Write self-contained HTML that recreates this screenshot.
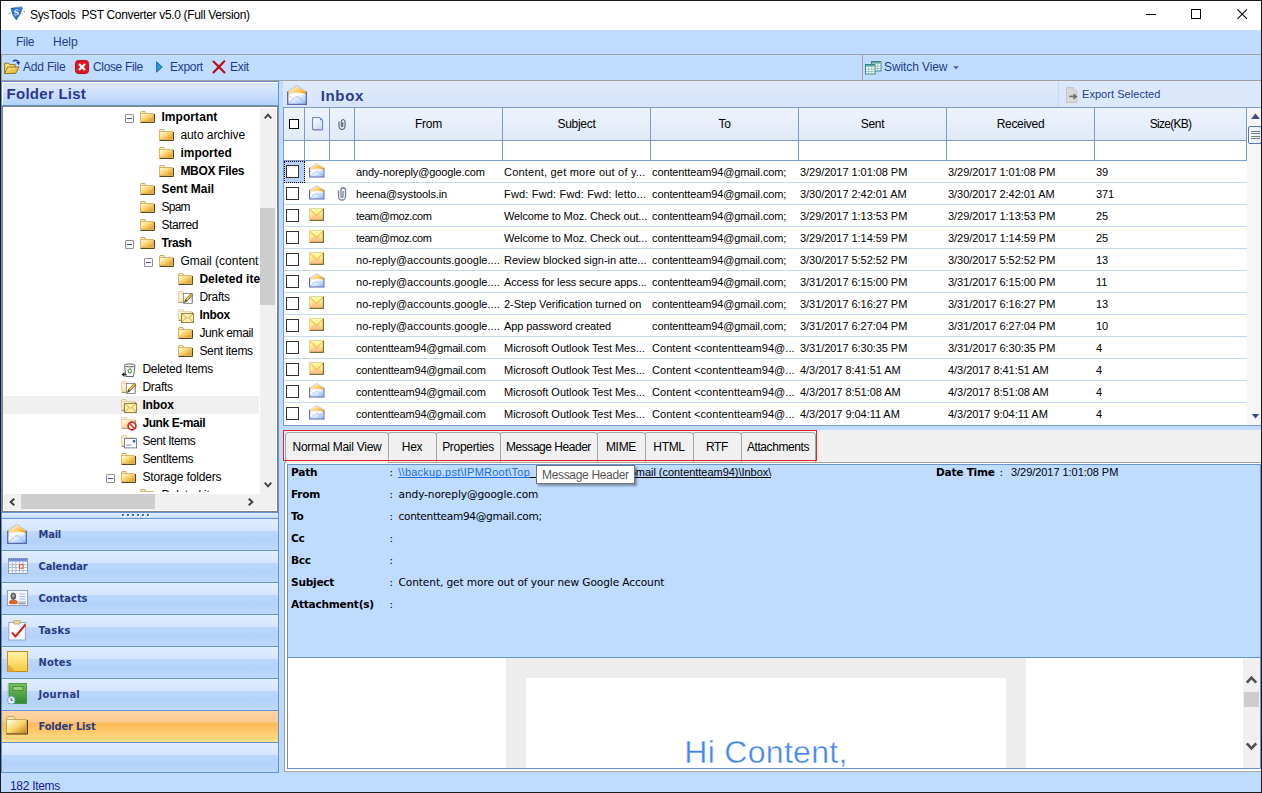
<!DOCTYPE html>
<html>
<head>
<meta charset="utf-8">
<title>SysTools PST Converter v5.0 (Full Version)</title>
<style>
*{box-sizing:border-box;margin:0;padding:0}
html,body{width:1262px;height:793px;overflow:hidden;background:#bfdbff}
body{font-family:"Liberation Sans",sans-serif;font-size:12px;color:#000;position:relative}
.abs{position:absolute}
svg{display:block;overflow:visible}
#win{position:absolute;left:0;top:0;width:1262px;height:793px;background:#bfdbff;overflow:hidden}
.t{position:absolute;white-space:pre;line-height:16px;height:16px}
.seg{font-size:12px}
.navy{color:#1e3c8c}
.tah{font-size:11px;letter-spacing:-0.12px}
.ver{font-family:"DejaVu Sans","Liberation Sans",sans-serif;font-size:10.6px;letter-spacing:-0.1px}
.verb{font-family:"DejaVu Sans","Liberation Sans",sans-serif;font-size:10.6px;font-weight:bold;letter-spacing:-0.25px}
.b{font-weight:bold}
.hl{position:absolute;height:1px}
.vl{position:absolute;width:1px}
.nav{position:absolute;left:2px;width:276px;height:32px;border-top:1px solid #6593cf;background:linear-gradient(#e1edff 0,#d5e5fc 12px,#bdd8fc 12px,#b3d1fa 22px,#bfdafd 31px)}
.nav .t{left:36.5px;top:8px;color:#2b3a85;font-family:"DejaVu Sans Condensed","DejaVu Sans","Liberation Sans",sans-serif;font-weight:bold;font-size:11px;letter-spacing:0.05px}
.nav.sel{background:linear-gradient(#fdd5a8 0,#fbc98e 11px,#fdb959 12px,#fdc86a 20px,#fee08c 31px)}
.cb{position:absolute;width:13px;height:13px;border:1px solid #333;background:#fff}
.row{position:absolute;left:284px;width:962px;height:22px;border-bottom:1px solid #c4d8f2;background:#fff}
.tab{position:absolute;top:432px;height:30px;background:#f0f0f0;border:1px solid #a5a5a5;border-bottom:none;border-radius:4px 4px 0 0}
</style>
</head>
<body>
<div id="win">
<div class="abs" style="left:1px;top:1px;width:1260px;height:29px;background:#fff"></div><svg class="abs" style="left:8px;top:6px" width="18" height="15" viewBox="0 0 18 15"><defs><linearGradient id="sh" x1="0" y1="0" x2="1" y2="1"><stop offset="0" stop-color="#2a63c0"/><stop offset=".5" stop-color="#3f82e0"/><stop offset="1" stop-color="#173c86"/></linearGradient></defs><path d="M2.9 2.3L8.5 1.6L13.8 .9L14.3 2.3L12.6 7.2L8.3 13.9L4.6 8.4Z" fill="url(#sh)" stroke="#1d3f7c" stroke-width=".5"/><path d="M8.5 1.2L13.6 .6" stroke="#c9c9c9" stroke-width=".7"/><path d="M.8 8.4L1.4 7.2M1.6 6.8L2.2 6.2" stroke="#6a6a6a" stroke-width=".8"/><path d="M14.3 7.2L14.9 7.2M16.2 5.2V6.4" stroke="#555" stroke-width=".8"/><text x="8.4" y="9.2" font-family="Liberation Serif, serif" font-weight="bold" font-size="8.6" fill="#fff" text-anchor="middle" transform="rotate(-6 8.4 6)">S</text></svg><span class="t seg" style="left:30px;top:7px;letter-spacing:-0.33px">SysTools  PST Converter v5.0 (Full Version)</span><div class="abs" style="left:1146px;top:14px;width:10px;height:1px;background:#000"></div><div class="abs" style="left:1191px;top:9px;width:10px;height:10px;border:1px solid #000"></div><svg class="abs" style="left:1237px;top:9px" width="10.4" height="10.4" viewBox="0 0 11 11"><path d="M.5 .5L10.5 10.5M10.5 .5L.5 10.5" stroke="#000" stroke-width="1.1"/></svg><span class="t seg navy" style="left:16px;top:34px;letter-spacing:-0.3px">File</span><span class="t seg navy" style="left:53px;top:34px;letter-spacing:0px">Help</span><div class="hl" style="left:1px;top:54px;width:1260px;background:#a0a0a0"></div><div class="hl" style="left:1px;top:80px;width:1260px;background:#a0a0a0"></div><div class="vl" style="left:862px;top:55px;height:25px;background:#a0a0a0"></div><div class="vl" style="left:1px;top:55px;height:25px;background:#a0a0a0"></div><svg class="abs" style="left:4px;top:59px" width="16" height="16" viewBox="0 0 16 16"><defs><linearGradient id="af" x1="0" y1="0" x2="1" y2="1"><stop offset="0" stop-color="#fff19a"/><stop offset="1" stop-color="#d9a21b"/></linearGradient></defs><path d="M.6 14.5V4.2H4.6L5.8 5.6H11.2V8" fill="#f7dc70" stroke="#8a6a14" stroke-width=".9"/><path d="M.6 14.5L3.6 8H15L11.6 14.5Z" fill="url(#af)" stroke="#8a6a14" stroke-width=".9"/><path d="M9 2.6C11.2 .5 14.2 1 14.5 4" fill="none" stroke="#2438a0" stroke-width="1.4"/><path d="M12.1 3.3L14.9 6.3L16 2.5Z" fill="#2438a0"/></svg><span class="t seg navy" style="left:23px;top:59px;letter-spacing:-0.18px">Add File</span><svg class="abs" style="left:75px;top:60px" width="14" height="14" viewBox="0 0 15 15"><rect x=".5" y=".5" width="14" height="14" rx="3.2" fill="#e0141e" stroke="#b30d14"/><path d="M4.3 4.3L10.7 10.7M10.7 4.3L4.3 10.7" stroke="#fff" stroke-width="2.4"/></svg><span class="t seg navy" style="left:93px;top:59px;letter-spacing:-0.35px">Close File</span><svg class="abs" style="left:156px;top:61px" width="7" height="12" viewBox="0 0 7 12"><path d="M.6 .8L6.3 6L.6 11.2Z" fill="#1f9bdc" stroke="#14679a" stroke-width=".9"/></svg><span class="t seg navy" style="left:170px;top:59px;letter-spacing:-0.3px">Export</span><svg class="abs" style="left:212px;top:60px" width="14" height="14" viewBox="0 0 14 14"><path d="M1.5 1.5L12.5 12.5M12.3 1.3L1.5 12.5" stroke="#c0060c" stroke-width="2.1" stroke-linecap="round"/></svg><span class="t seg navy" style="left:230px;top:59px;letter-spacing:-0.3px">Exit</span><svg class="abs" style="left:865px;top:61px" width="17" height="14" viewBox="0 0 17 14"><rect x="6.5" y=".5" width="9.5" height="9.5" fill="#fff" stroke="#3b8588"/><rect x="7" y="1" width="8.5" height="1.7" fill="#62aaa8"/><path d="M9.7 3V9.5M12.8 3V9.5M7 5.2H15.5M7 7.6H15.5" stroke="#7fb5b4" stroke-width=".8"/><rect x=".5" y="3.5" width="9.5" height="9.5" fill="#fff" stroke="#3b8588"/><rect x="1" y="4" width="8.5" height="1.7" fill="#62aaa8"/><path d="M3.7 6V12.5M6.8 6V12.5M1 8.2H9.5M1 10.6H9.5" stroke="#7fb5b4" stroke-width=".8"/></svg><span class="t seg navy" style="left:884px;top:59px;letter-spacing:-0.1px">Switch View</span><svg class="abs" style="left:953px;top:66px" width="6" height="4" viewBox="0 0 6 4"><path d="M.2 .2H5.8L3 3.2Z" fill="#4a5a9a"/></svg><div class="abs" style="left:1px;top:81px;width:278px;height:692px;background:#6593cf"></div><div class="abs" style="left:2px;top:82px;width:276px;height:23px;background:linear-gradient(#dbe9fd 0,#cfe1fd 40%,#b3d1fb 100%);border-top:1px solid #fff;border-left:1px solid #fff"></div><span class="t b" style="left:6.6px;top:83.9px;letter-spacing:0.26px;font-size:15px;color:#2b388f;line-height:20px;height:20px">Folder List</span><div class="abs" style="left:2px;top:106px;width:276px;height:406px;background:#fff;border:1px solid #828282"></div><div class="abs" style="left:3px;top:396px;width:256px;height:18px;background:#f0f0f0"></div><div class="abs" style="left:2px;top:106px;width:258px;height:386px;overflow:hidden"><div class="abs" style="left:123px;top:8px;width:9px;height:9px;border:1px solid #919191;background:#fff;border-radius:1px"><div class="abs" style="left:1px;top:3px;width:5px;height:1px;background:#3b4fa0"></div></div><svg class="abs" style="left:138px;top:5px" width="16" height="13" viewBox="0 0 16 13"><defs><linearGradient id="fgt0" x1="0" y1="0" x2="1" y2="1"><stop offset="0" stop-color="#fffbe0"/><stop offset=".38" stop-color="#fde08a"/><stop offset=".7" stop-color="#f3b846"/><stop offset="1" stop-color="#dc8c16"/></linearGradient></defs><path d="M.5 2.5V1L1 .5H5L6 2.5" fill="#f8ecc0" stroke="#c9b070"/><path d="M.5 2.5H13.5V10.5H.5Z" fill="url(#fgt0)" stroke="#d8b868"/><path d="M.5 11.5H14.5V3" fill="none" stroke="#5a4616" stroke-width="1"/></svg><span class="t seg b" style="left:159.4px;top:3px;letter-spacing:0.08px">Important</span><svg class="abs" style="left:157px;top:23px" width="16" height="13" viewBox="0 0 16 13"><defs><linearGradient id="fgt1" x1="0" y1="0" x2="1" y2="1"><stop offset="0" stop-color="#fffbe0"/><stop offset=".38" stop-color="#fde08a"/><stop offset=".7" stop-color="#f3b846"/><stop offset="1" stop-color="#dc8c16"/></linearGradient></defs><path d="M.5 2.5V1L1 .5H5L6 2.5" fill="#f8ecc0" stroke="#c9b070"/><path d="M.5 2.5H13.5V10.5H.5Z" fill="url(#fgt1)" stroke="#d8b868"/><path d="M.5 11.5H14.5V3" fill="none" stroke="#5a4616" stroke-width="1"/></svg><span class="t seg" style="left:178.4px;top:21px;letter-spacing:-0.06px">auto archive</span><svg class="abs" style="left:157px;top:41px" width="16" height="13" viewBox="0 0 16 13"><defs><linearGradient id="fgt2" x1="0" y1="0" x2="1" y2="1"><stop offset="0" stop-color="#fffbe0"/><stop offset=".38" stop-color="#fde08a"/><stop offset=".7" stop-color="#f3b846"/><stop offset="1" stop-color="#dc8c16"/></linearGradient></defs><path d="M.5 2.5V1L1 .5H5L6 2.5" fill="#f8ecc0" stroke="#c9b070"/><path d="M.5 2.5H13.5V10.5H.5Z" fill="url(#fgt2)" stroke="#d8b868"/><path d="M.5 11.5H14.5V3" fill="none" stroke="#5a4616" stroke-width="1"/></svg><span class="t seg b" style="left:178.4px;top:39px;letter-spacing:0px">imported</span><svg class="abs" style="left:157px;top:59px" width="16" height="13" viewBox="0 0 16 13"><defs><linearGradient id="fgt3" x1="0" y1="0" x2="1" y2="1"><stop offset="0" stop-color="#fffbe0"/><stop offset=".38" stop-color="#fde08a"/><stop offset=".7" stop-color="#f3b846"/><stop offset="1" stop-color="#dc8c16"/></linearGradient></defs><path d="M.5 2.5V1L1 .5H5L6 2.5" fill="#f8ecc0" stroke="#c9b070"/><path d="M.5 2.5H13.5V10.5H.5Z" fill="url(#fgt3)" stroke="#d8b868"/><path d="M.5 11.5H14.5V3" fill="none" stroke="#5a4616" stroke-width="1"/></svg><span class="t seg b" style="left:178.4px;top:57px;letter-spacing:-0.29px">MBOX Files</span><svg class="abs" style="left:138px;top:77px" width="16" height="13" viewBox="0 0 16 13"><defs><linearGradient id="fgt4" x1="0" y1="0" x2="1" y2="1"><stop offset="0" stop-color="#fffbe0"/><stop offset=".38" stop-color="#fde08a"/><stop offset=".7" stop-color="#f3b846"/><stop offset="1" stop-color="#dc8c16"/></linearGradient></defs><path d="M.5 2.5V1L1 .5H5L6 2.5" fill="#f8ecc0" stroke="#c9b070"/><path d="M.5 2.5H13.5V10.5H.5Z" fill="url(#fgt4)" stroke="#d8b868"/><path d="M.5 11.5H14.5V3" fill="none" stroke="#5a4616" stroke-width="1"/></svg><span class="t seg b" style="left:159.4px;top:75px;letter-spacing:0px">Sent Mail</span><svg class="abs" style="left:138px;top:95px" width="16" height="13" viewBox="0 0 16 13"><defs><linearGradient id="fgt5" x1="0" y1="0" x2="1" y2="1"><stop offset="0" stop-color="#fffbe0"/><stop offset=".38" stop-color="#fde08a"/><stop offset=".7" stop-color="#f3b846"/><stop offset="1" stop-color="#dc8c16"/></linearGradient></defs><path d="M.5 2.5V1L1 .5H5L6 2.5" fill="#f8ecc0" stroke="#c9b070"/><path d="M.5 2.5H13.5V10.5H.5Z" fill="url(#fgt5)" stroke="#d8b868"/><path d="M.5 11.5H14.5V3" fill="none" stroke="#5a4616" stroke-width="1"/></svg><span class="t seg" style="left:159.4px;top:93px;letter-spacing:-0.72px">Spam</span><svg class="abs" style="left:138px;top:113px" width="16" height="13" viewBox="0 0 16 13"><defs><linearGradient id="fgt6" x1="0" y1="0" x2="1" y2="1"><stop offset="0" stop-color="#fffbe0"/><stop offset=".38" stop-color="#fde08a"/><stop offset=".7" stop-color="#f3b846"/><stop offset="1" stop-color="#dc8c16"/></linearGradient></defs><path d="M.5 2.5V1L1 .5H5L6 2.5" fill="#f8ecc0" stroke="#c9b070"/><path d="M.5 2.5H13.5V10.5H.5Z" fill="url(#fgt6)" stroke="#d8b868"/><path d="M.5 11.5H14.5V3" fill="none" stroke="#5a4616" stroke-width="1"/></svg><span class="t seg" style="left:159.4px;top:111px;letter-spacing:-0.4px">Starred</span><div class="abs" style="left:123px;top:134px;width:9px;height:9px;border:1px solid #919191;background:#fff;border-radius:1px"><div class="abs" style="left:1px;top:3px;width:5px;height:1px;background:#3b4fa0"></div></div><svg class="abs" style="left:138px;top:131px" width="16" height="13" viewBox="0 0 16 13"><defs><linearGradient id="fgt7" x1="0" y1="0" x2="1" y2="1"><stop offset="0" stop-color="#fffbe0"/><stop offset=".38" stop-color="#fde08a"/><stop offset=".7" stop-color="#f3b846"/><stop offset="1" stop-color="#dc8c16"/></linearGradient></defs><path d="M.5 2.5V1L1 .5H5L6 2.5" fill="#f8ecc0" stroke="#c9b070"/><path d="M.5 2.5H13.5V10.5H.5Z" fill="url(#fgt7)" stroke="#d8b868"/><path d="M.5 11.5H14.5V3" fill="none" stroke="#5a4616" stroke-width="1"/></svg><span class="t seg b" style="left:159.4px;top:129px;letter-spacing:-0.4px">Trash</span><div class="abs" style="left:142px;top:152px;width:9px;height:9px;border:1px solid #919191;background:#fff;border-radius:1px"><div class="abs" style="left:1px;top:3px;width:5px;height:1px;background:#3b4fa0"></div></div><svg class="abs" style="left:157px;top:149px" width="16" height="13" viewBox="0 0 16 13"><defs><linearGradient id="fgt8" x1="0" y1="0" x2="1" y2="1"><stop offset="0" stop-color="#fffbe0"/><stop offset=".38" stop-color="#fde08a"/><stop offset=".7" stop-color="#f3b846"/><stop offset="1" stop-color="#dc8c16"/></linearGradient></defs><path d="M.5 2.5V1L1 .5H5L6 2.5" fill="#f8ecc0" stroke="#c9b070"/><path d="M.5 2.5H13.5V10.5H.5Z" fill="url(#fgt8)" stroke="#d8b868"/><path d="M.5 11.5H14.5V3" fill="none" stroke="#5a4616" stroke-width="1"/></svg><span class="t seg" style="left:178.4px;top:147px;letter-spacing:0px">Gmail (content</span><svg class="abs" style="left:176px;top:167px" width="16" height="13" viewBox="0 0 16 13"><defs><linearGradient id="fgt9" x1="0" y1="0" x2="1" y2="1"><stop offset="0" stop-color="#fffbe0"/><stop offset=".38" stop-color="#fde08a"/><stop offset=".7" stop-color="#f3b846"/><stop offset="1" stop-color="#dc8c16"/></linearGradient></defs><path d="M.5 2.5V1L1 .5H5L6 2.5" fill="#f8ecc0" stroke="#c9b070"/><path d="M.5 2.5H13.5V10.5H.5Z" fill="url(#fgt9)" stroke="#d8b868"/><path d="M.5 11.5H14.5V3" fill="none" stroke="#5a4616" stroke-width="1"/></svg><span class="t seg b" style="left:197.4px;top:165px;letter-spacing:0px">Deleted ite</span><div class="abs" style="left:0;top:0;opacity:.55"><svg class="abs" style="left:176px;top:185px" width="16" height="13" viewBox="0 0 16 13"><defs><linearGradient id="fgt10" x1="0" y1="0" x2="1" y2="1"><stop offset="0" stop-color="#fffbe0"/><stop offset=".38" stop-color="#fde08a"/><stop offset=".7" stop-color="#f3b846"/><stop offset="1" stop-color="#dc8c16"/></linearGradient></defs><path d="M.5 2.5V1L1 .5H5L6 2.5" fill="#f8ecc0" stroke="#c9b070"/><path d="M.5 2.5H13.5V10.5H.5Z" fill="url(#fgt10)" stroke="#d8b868"/><path d="M.5 11.5H14.5V3" fill="none" stroke="#5a4616" stroke-width="1"/></svg></div><svg class="abs" style="left:178.5px;top:186px" width="12.5" height="12.5" viewBox="0 0 13 13"><rect x="2.5" y="1.5" width="9" height="10.5" fill="#fff" stroke="#7a7a8a" stroke-width=".8"/><path d="M3.5 11L5 7.5L10.5 1.5L12 3L6.5 9.2Z" fill="#f2c230" stroke="#5a4a20" stroke-width=".7"/><path d="M3.5 11L5 7.5L6.5 9.2Z" fill="#333"/></svg><span class="t seg" style="left:197.4px;top:183px;letter-spacing:-0.28px">Drafts</span><div class="abs" style="left:0;top:0;opacity:.55"><svg class="abs" style="left:176px;top:203px" width="16" height="13" viewBox="0 0 16 13"><defs><linearGradient id="fgt11" x1="0" y1="0" x2="1" y2="1"><stop offset="0" stop-color="#fffbe0"/><stop offset=".38" stop-color="#fde08a"/><stop offset=".7" stop-color="#f3b846"/><stop offset="1" stop-color="#dc8c16"/></linearGradient></defs><path d="M.5 2.5V1L1 .5H5L6 2.5" fill="#f8ecc0" stroke="#c9b070"/><path d="M.5 2.5H13.5V10.5H.5Z" fill="url(#fgt11)" stroke="#d8b868"/><path d="M.5 11.5H14.5V3" fill="none" stroke="#5a4616" stroke-width="1"/></svg></div><svg class="abs" style="left:179px;top:206.5px" width="13" height="10" viewBox="0 0 13 10"><rect x=".5" y=".5" width="12" height="9" fill="#fff0a8" stroke="#8a7a40" stroke-width=".9"/><path d="M1 1L6.5 5.5L12 1M1 9L5 4.5M12 9L8 4.5" fill="none" stroke="#b89a40" stroke-width=".8"/></svg><span class="t seg b" style="left:197.4px;top:201px;letter-spacing:-0.3px">Inbox</span><svg class="abs" style="left:176px;top:221px" width="16" height="13" viewBox="0 0 16 13"><defs><linearGradient id="fgt12" x1="0" y1="0" x2="1" y2="1"><stop offset="0" stop-color="#fffbe0"/><stop offset=".38" stop-color="#fde08a"/><stop offset=".7" stop-color="#f3b846"/><stop offset="1" stop-color="#dc8c16"/></linearGradient></defs><path d="M.5 2.5V1L1 .5H5L6 2.5" fill="#f8ecc0" stroke="#c9b070"/><path d="M.5 2.5H13.5V10.5H.5Z" fill="url(#fgt12)" stroke="#d8b868"/><path d="M.5 11.5H14.5V3" fill="none" stroke="#5a4616" stroke-width="1"/></svg><span class="t seg" style="left:197.4px;top:219px;letter-spacing:-0.36px">Junk email</span><svg class="abs" style="left:176px;top:239px" width="16" height="13" viewBox="0 0 16 13"><defs><linearGradient id="fgt13" x1="0" y1="0" x2="1" y2="1"><stop offset="0" stop-color="#fffbe0"/><stop offset=".38" stop-color="#fde08a"/><stop offset=".7" stop-color="#f3b846"/><stop offset="1" stop-color="#dc8c16"/></linearGradient></defs><path d="M.5 2.5V1L1 .5H5L6 2.5" fill="#f8ecc0" stroke="#c9b070"/><path d="M.5 2.5H13.5V10.5H.5Z" fill="url(#fgt13)" stroke="#d8b868"/><path d="M.5 11.5H14.5V3" fill="none" stroke="#5a4616" stroke-width="1"/></svg><span class="t seg" style="left:197.4px;top:237px;letter-spacing:-0.33px">Sent items</span><svg class="abs" style="left:119px;top:257px" width="16" height="13" viewBox="0 0 16 13"><defs><linearGradient id="fgt14" x1="0" y1="0" x2="1" y2="1"><stop offset="0" stop-color="#fffbe0"/><stop offset=".38" stop-color="#fde08a"/><stop offset=".7" stop-color="#f3b846"/><stop offset="1" stop-color="#dc8c16"/></linearGradient></defs><path d="M.5 2.5V1L1 .5H5L6 2.5" fill="#f8ecc0" stroke="#c9b070"/><path d="M.5 2.5H13.5V10.5H.5Z" fill="url(#fgt14)" stroke="#d8b868"/><path d="M.5 11.5H14.5V3" fill="none" stroke="#5a4616" stroke-width="1"/></svg><div class="abs" style="left:118px;top:256px;width:18px;height:15px;background:#fff"></div><svg class="abs" style="left:119px;top:256px" width="16" height="16" viewBox="0 0 16 16"><path d="M3.5 3.5L5 14.5H12.5L14 3.5Z" fill="#f4f6f8" stroke="#555" stroke-width=".9"/><ellipse cx="8.7" cy="3.4" rx="5.4" ry="1.5" fill="#fff" stroke="#555" stroke-width=".9"/><path d="M7 8.5L8.8 6.5L10.6 8.5L9.8 11H7.8Z" fill="none" stroke="#2f8a3a" stroke-width="1"/><path d="M.5 12.5L3.5 10V15Z" fill="#222"/><path d="M2 12.5H5.5" stroke="#222" stroke-width="1"/></svg><span class="t seg" style="left:140.4px;top:255px;letter-spacing:-0.26px">Deleted Items</span><div class="abs" style="left:0;top:0;opacity:.55"><svg class="abs" style="left:119px;top:275px" width="16" height="13" viewBox="0 0 16 13"><defs><linearGradient id="fgt15" x1="0" y1="0" x2="1" y2="1"><stop offset="0" stop-color="#fffbe0"/><stop offset=".38" stop-color="#fde08a"/><stop offset=".7" stop-color="#f3b846"/><stop offset="1" stop-color="#dc8c16"/></linearGradient></defs><path d="M.5 2.5V1L1 .5H5L6 2.5" fill="#f8ecc0" stroke="#c9b070"/><path d="M.5 2.5H13.5V10.5H.5Z" fill="url(#fgt15)" stroke="#d8b868"/><path d="M.5 11.5H14.5V3" fill="none" stroke="#5a4616" stroke-width="1"/></svg></div><svg class="abs" style="left:121.5px;top:276px" width="12.5" height="12.5" viewBox="0 0 13 13"><rect x="2.5" y="1.5" width="9" height="10.5" fill="#fff" stroke="#7a7a8a" stroke-width=".8"/><path d="M3.5 11L5 7.5L10.5 1.5L12 3L6.5 9.2Z" fill="#f2c230" stroke="#5a4a20" stroke-width=".7"/><path d="M3.5 11L5 7.5L6.5 9.2Z" fill="#333"/></svg><span class="t seg" style="left:140.4px;top:273px;letter-spacing:-0.28px">Drafts</span><div class="abs" style="left:0;top:0;opacity:.55"><svg class="abs" style="left:119px;top:293px" width="16" height="13" viewBox="0 0 16 13"><defs><linearGradient id="fgt16" x1="0" y1="0" x2="1" y2="1"><stop offset="0" stop-color="#fffbe0"/><stop offset=".38" stop-color="#fde08a"/><stop offset=".7" stop-color="#f3b846"/><stop offset="1" stop-color="#dc8c16"/></linearGradient></defs><path d="M.5 2.5V1L1 .5H5L6 2.5" fill="#f8ecc0" stroke="#c9b070"/><path d="M.5 2.5H13.5V10.5H.5Z" fill="url(#fgt16)" stroke="#d8b868"/><path d="M.5 11.5H14.5V3" fill="none" stroke="#5a4616" stroke-width="1"/></svg></div><svg class="abs" style="left:122px;top:296.5px" width="13" height="10" viewBox="0 0 13 10"><rect x=".5" y=".5" width="12" height="9" fill="#fff0a8" stroke="#8a7a40" stroke-width=".9"/><path d="M1 1L6.5 5.5L12 1M1 9L5 4.5M12 9L8 4.5" fill="none" stroke="#b89a40" stroke-width=".8"/></svg><span class="t seg b" style="left:140.4px;top:291px;letter-spacing:-0.12px">Inbox</span><div class="abs" style="left:0;top:0;opacity:.55"><svg class="abs" style="left:119px;top:311px" width="16" height="13" viewBox="0 0 16 13"><defs><linearGradient id="fgt17" x1="0" y1="0" x2="1" y2="1"><stop offset="0" stop-color="#fffbe0"/><stop offset=".38" stop-color="#fde08a"/><stop offset=".7" stop-color="#f3b846"/><stop offset="1" stop-color="#dc8c16"/></linearGradient></defs><path d="M.5 2.5V1L1 .5H5L6 2.5" fill="#f8ecc0" stroke="#c9b070"/><path d="M.5 2.5H13.5V10.5H.5Z" fill="url(#fgt17)" stroke="#d8b868"/><path d="M.5 11.5H14.5V3" fill="none" stroke="#5a4616" stroke-width="1"/></svg></div><svg class="abs" style="left:125px;top:315px" width="10" height="10" viewBox="0 0 11 11"><circle cx="5.5" cy="5.5" r="4.3" fill="#fff" stroke="#d02a1a" stroke-width="1.9"/><path d="M2.5 2.5L8.5 8.5" stroke="#d02a1a" stroke-width="1.8"/></svg><span class="t seg b" style="left:140.4px;top:309px;letter-spacing:-0.42px">Junk E-mail</span><div class="abs" style="left:0;top:0;opacity:.55"><svg class="abs" style="left:119px;top:329px" width="16" height="13" viewBox="0 0 16 13"><defs><linearGradient id="fgt18" x1="0" y1="0" x2="1" y2="1"><stop offset="0" stop-color="#fffbe0"/><stop offset=".38" stop-color="#fde08a"/><stop offset=".7" stop-color="#f3b846"/><stop offset="1" stop-color="#dc8c16"/></linearGradient></defs><path d="M.5 2.5V1L1 .5H5L6 2.5" fill="#f8ecc0" stroke="#c9b070"/><path d="M.5 2.5H13.5V10.5H.5Z" fill="url(#fgt18)" stroke="#d8b868"/><path d="M.5 11.5H14.5V3" fill="none" stroke="#5a4616" stroke-width="1"/></svg></div><svg class="abs" style="left:122px;top:332px" width="13" height="10.5" viewBox="0 0 14 11"><rect x=".5" y=".5" width="13" height="10" fill="#fff" stroke="#5a6a9a" stroke-width=".9"/><path d="M2.5 7.5H8" stroke="#5a6a9a" stroke-width=".8"/><rect x="9.5" y="2" width="2.6" height="2.6" fill="#3a56b8"/></svg><span class="t seg" style="left:140.4px;top:327px;letter-spacing:-0.44px">Sent Items</span><svg class="abs" style="left:119px;top:347px" width="16" height="13" viewBox="0 0 16 13"><defs><linearGradient id="fgt19" x1="0" y1="0" x2="1" y2="1"><stop offset="0" stop-color="#fffbe0"/><stop offset=".38" stop-color="#fde08a"/><stop offset=".7" stop-color="#f3b846"/><stop offset="1" stop-color="#dc8c16"/></linearGradient></defs><path d="M.5 2.5V1L1 .5H5L6 2.5" fill="#f8ecc0" stroke="#c9b070"/><path d="M.5 2.5H13.5V10.5H.5Z" fill="url(#fgt19)" stroke="#d8b868"/><path d="M.5 11.5H14.5V3" fill="none" stroke="#5a4616" stroke-width="1"/></svg><span class="t seg" style="left:140.4px;top:345px;letter-spacing:-0.36px">SentItems</span><div class="abs" style="left:104px;top:368px;width:9px;height:9px;border:1px solid #919191;background:#fff;border-radius:1px"><div class="abs" style="left:1px;top:3px;width:5px;height:1px;background:#3b4fa0"></div></div><svg class="abs" style="left:119px;top:365px" width="16" height="13" viewBox="0 0 16 13"><defs><linearGradient id="fgt20" x1="0" y1="0" x2="1" y2="1"><stop offset="0" stop-color="#fffbe0"/><stop offset=".38" stop-color="#fde08a"/><stop offset=".7" stop-color="#f3b846"/><stop offset="1" stop-color="#dc8c16"/></linearGradient></defs><path d="M.5 2.5V1L1 .5H5L6 2.5" fill="#f8ecc0" stroke="#c9b070"/><path d="M.5 2.5H13.5V10.5H.5Z" fill="url(#fgt20)" stroke="#d8b868"/><path d="M.5 11.5H14.5V3" fill="none" stroke="#5a4616" stroke-width="1"/></svg><span class="t seg" style="left:140.4px;top:363px;letter-spacing:-0.16px">Storage folders</span><svg class="abs" style="left:138px;top:383px" width="16" height="13" viewBox="0 0 16 13"><defs><linearGradient id="fgt21" x1="0" y1="0" x2="1" y2="1"><stop offset="0" stop-color="#fffbe0"/><stop offset=".38" stop-color="#fde08a"/><stop offset=".7" stop-color="#f3b846"/><stop offset="1" stop-color="#dc8c16"/></linearGradient></defs><path d="M.5 2.5V1L1 .5H5L6 2.5" fill="#f8ecc0" stroke="#c9b070"/><path d="M.5 2.5H13.5V10.5H.5Z" fill="url(#fgt21)" stroke="#d8b868"/><path d="M.5 11.5H14.5V3" fill="none" stroke="#5a4616" stroke-width="1"/></svg><span class="t seg" style="left:159.4px;top:381px;letter-spacing:-0.26px">Deleted it</span></div><div class="abs" style="left:260px;top:108px;width:16px;height:386px;background:#f0f0f0"></div><div class="abs" style="left:260px;top:208px;width:15px;height:97px;background:#cdcdcd"></div><svg class="abs" style="left:264px;top:113px" width="8" height="6" viewBox="0 0 8 6"><path d="M.7 5.3L4 1.6L7.3 5.3" fill="none" stroke="#404040" stroke-width="1.9"/></svg><svg class="abs" style="left:264px;top:482px" width="8" height="6" viewBox="0 0 8 6"><path d="M.7 .7L4 4.4L7.3 .7" fill="none" stroke="#404040" stroke-width="1.9"/></svg><div class="abs" style="left:4px;top:494px;width:272px;height:16px;background:#f0f0f0"></div><div class="abs" style="left:21px;top:494px;width:134px;height:15px;background:#cdcdcd"></div><svg class="abs" style="left:9px;top:498px" width="6" height="8" viewBox="0 0 6 8"><path d="M5.3 .7L1.6 4L5.3 7.3" fill="none" stroke="#404040" stroke-width="1.9"/></svg><svg class="abs" style="left:248px;top:498px" width="6" height="8" viewBox="0 0 6 8"><path d="M.7 .7L4.4 4L.7 7.3" fill="none" stroke="#404040" stroke-width="1.9"/></svg><div class="abs" style="left:2px;top:513px;width:276px;height:5px;background:linear-gradient(#e3edfd,#c4dcfc)"></div><div class="abs" style="left:123px;top:515px;width:2px;height:2px;background:#fff"></div><div class="abs" style="left:122px;top:514px;width:2px;height:2px;background:#3f6fc0"></div><div class="abs" style="left:128px;top:515px;width:2px;height:2px;background:#fff"></div><div class="abs" style="left:127px;top:514px;width:2px;height:2px;background:#3f6fc0"></div><div class="abs" style="left:133px;top:515px;width:2px;height:2px;background:#fff"></div><div class="abs" style="left:132px;top:514px;width:2px;height:2px;background:#3f6fc0"></div><div class="abs" style="left:138px;top:515px;width:2px;height:2px;background:#fff"></div><div class="abs" style="left:137px;top:514px;width:2px;height:2px;background:#3f6fc0"></div><div class="abs" style="left:143px;top:515px;width:2px;height:2px;background:#fff"></div><div class="abs" style="left:142px;top:514px;width:2px;height:2px;background:#3f6fc0"></div><div class="abs" style="left:148px;top:515px;width:2px;height:2px;background:#fff"></div><div class="abs" style="left:147px;top:514px;width:2px;height:2px;background:#3f6fc0"></div><div class="nav" style="top:518px"><span class="t" style="letter-spacing:-0.2px">Mail</span></div><div class="nav" style="top:550px"><span class="t" style="letter-spacing:-0.07px">Calendar</span></div><div class="nav" style="top:582px"><span class="t" style="letter-spacing:0.0px">Contacts</span></div><div class="nav" style="top:614px"><span class="t" style="letter-spacing:0.35px">Tasks</span></div><div class="nav" style="top:646px"><span class="t" style="letter-spacing:0.17px">Notes</span></div><div class="nav" style="top:678px"><span class="t" style="letter-spacing:0.29px">Journal</span></div><div class="nav sel" style="top:710px"><span class="t" style="letter-spacing:-0.17px">Folder List</span></div><div class="nav" style="top:742px;height:31px;border-bottom:1px solid #6593cf"></div><svg class="abs" style="left:7px;top:524px" width="20" height="20" viewBox="0 0 20 20" preserveAspectRatio="none"><defs><linearGradient id="eonm" x1="0" y1="0" x2="1" y2="1"><stop offset=".3" stop-color="#ffffff"/><stop offset="1" stop-color="#86c0f8"/></linearGradient><linearGradient id="efnm" x1="0" y1="0" x2="1" y2="1"><stop offset=".15" stop-color="#fff8c8"/><stop offset=".85" stop-color="#f5a400"/></linearGradient></defs><path d="M1.5 6.9L10 1.1L18.5 6.9V10.5H1.5Z" fill="url(#efnm)"/><path d="M.9 6.6L10 .5L19.1 6.6" fill="none" stroke="#b4b2d0" stroke-width=".8"/><path d="M1.2 10.6C6 7.8 14 7.8 18.8 10.6V18.9H1.2Z" fill="url(#eonm)"/><path d="M1.4 9.4C6 6.9 14 6.9 18.6 9.4V11C14 8.4 6 8.4 1.4 11Z" fill="#f3f4fa"/><path d="M1.3 18.7L7.8 12.6C9.2 11.5 10.8 11.5 12.2 12.6L18.7 18.7" fill="none" stroke="#a3a8da" stroke-width=".8"/><path d="M1.3 10.8L6.3 14.2M18.7 10.8L13.7 14.2" stroke="#c0c4e6" stroke-width=".7"/><path d="M.7 6.6V19.3H19.3V6.6" fill="none" stroke="#5d63ae" stroke-width="1.3"/></svg><svg class="abs" style="left:8px;top:558px" width="20" height="16" viewBox="0 0 20 16"><rect x=".5" y=".5" width="19" height="15" fill="#fbfcff" stroke="#8791b8" stroke-width=".9"/><rect x="1" y="1" width="18" height="2.6" fill="#6f95e2"/><path d="M1 1.1H19" stroke="#4f66b0" stroke-dasharray="1 1" stroke-width=".9"/><path d="M4.3 3.6V15M7.9 3.6V15M11.5 3.6V15M15.1 3.6V15M1 6.6H19M1 9.6H19M1 12.6H19" stroke="#a4b2d8" stroke-width=".9"/><rect x="11.5" y="6.6" width="3.6" height="3.6" fill="#fff" stroke="#e0522a" stroke-width="1"/></svg><svg class="abs" style="left:7px;top:590px" width="21" height="16" viewBox="0 0 21 16"><rect x=".5" y=".5" width="20" height="15" fill="#f6f8fc" stroke="#8a94b8" stroke-width=".9"/><path d="M12.5 4H18.5M12.5 6.5H18.5M12.5 9H18.5" stroke="#9eb8ea" stroke-width="1.1"/><path d="M11.5 12H18.8M11.5 13.6H18.8" stroke="#8a98b8" stroke-width="1.1"/><path d="M2.2 13.2C2.2 10.6 4 10 6.3 10S10.4 10.6 10.4 13.2C9 14 3.6 14 2.2 13.2Z" fill="#e8601a" stroke="#b4440c" stroke-width=".6"/><ellipse cx="6.3" cy="6.2" rx="2.4" ry="3.3" fill="#707070" stroke="#3a3a3a" stroke-width=".7"/><ellipse cx="6.3" cy="5.6" rx="1.1" ry="1.6" fill="#a8a8a8"/></svg><svg class="abs" style="left:8px;top:620px" width="20" height="21" viewBox="0 0 20 21"><rect x=".8" y="2.5" width="16.5" height="17.5" fill="#fbfcff" stroke="#8f9cc8" stroke-width=".9"/><rect x="5.5" y=".6" width="7" height="3.4" rx="1" fill="#e6d7a0" stroke="#a89a60" stroke-width=".7"/><path d="M4 12.5L7.5 16.5L17.5 4.5" fill="none" stroke="#dc1e1e" stroke-width="2"/></svg><svg class="abs" style="left:7px;top:651px" width="21" height="21" viewBox="0 0 21 21"><defs><linearGradient id="nt" x1="0" y1="0" x2="0" y2="1"><stop offset="0" stop-color="#fff6a8"/><stop offset="1" stop-color="#f7c83a"/></linearGradient></defs><rect x=".5" y=".5" width="20" height="20" fill="url(#nt)" stroke="#c88a1e"/><path d="M1 14C3 15 6 17 7.5 20.5H1Z" fill="#e0ac30"/></svg><svg class="abs" style="left:7px;top:683px" width="21" height="22" viewBox="0 0 21 22"><defs><linearGradient id="jr" x1="0" y1="0" x2="0" y2="1"><stop offset="0" stop-color="#7cc060"/><stop offset="1" stop-color="#2f8a2f"/></linearGradient></defs><rect x="2" y=".5" width="17.5" height="20" fill="url(#jr)" stroke="#3c8a3a" stroke-width=".8"/><path d="M1 2V19" stroke="#9a9a9a" stroke-dasharray="1 1.4" stroke-width="1"/><rect x="6" y="3.5" width="10" height="4" fill="#9ad07a" stroke="#3f8f3a" stroke-width=".9"/><circle cx="4.2" cy="17.2" r="3.8" fill="#e8f2fc" stroke="#7aa6dc" stroke-width=".9"/><path d="M4.2 15V17.4H6" fill="none" stroke="#555" stroke-width=".9"/></svg><svg class="abs" style="left:6px;top:716px" width="22" height="19" viewBox="0 0 22 19"><defs><linearGradient id="fl" x1="0" y1="0" x2="1" y2="1"><stop offset="0" stop-color="#fffde8"/><stop offset=".5" stop-color="#f9d870"/><stop offset="1" stop-color="#c47e10"/></linearGradient></defs><path d="M.5 3.5V1.6L1.5 .6H8L9.5 3.5" fill="#f4e6b0" stroke="#b09a60" stroke-width=".8"/><path d="M.5 3.5H20.5V17.5H.5Z" fill="url(#fl)" stroke="#c4a050" stroke-width=".9"/><path d="M.5 18H21.5V4" fill="none" stroke="#4a3a18" stroke-width="1"/></svg><span class="t seg" style="left:10px;top:778px;color:#1a1a9a;letter-spacing:-0.3px">182 Items</span><div class="abs" style="left:283px;top:81px;width:978px;height:26px;background:linear-gradient(#dfebfc,#d6e4fa)"></div><div class="abs" style="left:1058px;top:81px;width:203px;height:26px;background:#dbe8fb;border-left:1px solid #c5d8f4"></div><svg class="abs" style="left:287px;top:85px" width="20" height="20" viewBox="0 0 20 20" preserveAspectRatio="none"><defs><linearGradient id="eoih" x1="0" y1="0" x2="1" y2="1"><stop offset=".3" stop-color="#ffffff"/><stop offset="1" stop-color="#86c0f8"/></linearGradient><linearGradient id="efih" x1="0" y1="0" x2="1" y2="1"><stop offset=".15" stop-color="#fff8c8"/><stop offset=".85" stop-color="#f5a400"/></linearGradient></defs><path d="M1.5 6.9L10 1.1L18.5 6.9V10.5H1.5Z" fill="url(#efih)"/><path d="M.9 6.6L10 .5L19.1 6.6" fill="none" stroke="#b4b2d0" stroke-width=".8"/><path d="M1.2 10.6C6 7.8 14 7.8 18.8 10.6V18.9H1.2Z" fill="url(#eoih)"/><path d="M1.4 9.4C6 6.9 14 6.9 18.6 9.4V11C14 8.4 6 8.4 1.4 11Z" fill="#f3f4fa"/><path d="M1.3 18.7L7.8 12.6C9.2 11.5 10.8 11.5 12.2 12.6L18.7 18.7" fill="none" stroke="#a3a8da" stroke-width=".8"/><path d="M1.3 10.8L6.3 14.2M18.7 10.8L13.7 14.2" stroke="#c0c4e6" stroke-width=".7"/><path d="M.7 6.6V19.3H19.3V6.6" fill="none" stroke="#5d63ae" stroke-width="1.3"/></svg><span class="t b" style="left:320.8px;top:86px;letter-spacing:0.62px;font-size:15px;color:#2b3a8a;line-height:20px;height:20px">Inbox</span><svg class="abs" style="left:1066px;top:87px" width="13" height="16" viewBox="0 0 14 17"><path d="M.5 .5H8L11.5 4V16.5H.5Z" fill="#d9d9d9" stroke="#bdbdbd" stroke-width=".9"/><path d="M8 .5V4H11.5" fill="#efefef" stroke="#bdbdbd" stroke-width=".8"/><path d="M3.5 10H9" stroke="#6e6e6e" stroke-width="1.8"/><path d="M8 6.5L12.5 10L8 13.5Z" fill="#6e6e6e"/></svg><span class="t tah navy" style="left:1082px;top:86px;letter-spacing:0.05px">Export Selected</span><div class="abs" style="left:283px;top:107px;width:978px;height:319px;background:#fff;border-top:1px solid #7b9bc9;border-left:1px solid #7b9bc9;border-bottom:1px solid #7b9bc9"></div><div class="abs" style="left:284px;top:108px;width:963px;height:32px;background:linear-gradient(#edf3fc,#e1eaf8)"></div><div class="hl" style="left:284px;top:140px;width:963px;background:#7b9bc9"></div><div class="hl" style="left:284px;top:160px;width:963px;background:#7b9bc9"></div><div class="vl" style="left:304px;top:108px;height:52px;background:#7b9bc9"></div><div class="vl" style="left:329px;top:108px;height:52px;background:#7b9bc9"></div><div class="vl" style="left:354px;top:108px;height:52px;background:#7b9bc9"></div><div class="vl" style="left:502px;top:108px;height:52px;background:#7b9bc9"></div><div class="vl" style="left:650px;top:108px;height:52px;background:#7b9bc9"></div><div class="vl" style="left:798px;top:108px;height:52px;background:#7b9bc9"></div><div class="vl" style="left:946px;top:108px;height:52px;background:#7b9bc9"></div><div class="vl" style="left:1094px;top:108px;height:52px;background:#7b9bc9"></div><div class="vl" style="left:1246px;top:108px;height:52px;background:#7b9bc9"></div><span class="t seg" style="left:355px;width:147px;top:116px;text-align:center;letter-spacing:-0.3px">From</span><span class="t seg" style="left:503px;width:147px;top:116px;text-align:center;letter-spacing:-0.3px">Subject</span><span class="t seg" style="left:651px;width:147px;top:116px;text-align:center;letter-spacing:-0.3px">To</span><span class="t seg" style="left:799px;width:147px;top:116px;text-align:center;letter-spacing:-0.3px">Sent</span><span class="t seg" style="left:947px;width:147px;top:116px;text-align:center;letter-spacing:-0.3px">Received</span><span class="t seg" style="left:1095px;width:151px;top:116px;text-align:center;letter-spacing:-0.7px">Size(KB)</span><div class="cb" style="left:289px;top:119px;width:10px;height:10px;border-color:#000"></div><svg class="abs" style="left:312px;top:117px" width="12" height="14" viewBox="0 0 12 14"><defs><linearGradient id="pg" x1="0" y1="0" x2="1" y2="1"><stop offset="0" stop-color="#ffffff"/><stop offset="1" stop-color="#c4daf8"/></linearGradient></defs><path d="M.6 .6H8L10.6 3.2V12.6H.6Z" fill="url(#pg)" stroke="#6a78c0" stroke-width="1"/><path d="M8 .6V3.2H10.6Z" fill="#5a8ae0"/><path d="M1 13.4H11.2" stroke="#b9a8d8" stroke-width=".9"/></svg><svg class="abs" style="left:338px;top:119px" width="8" height="11" viewBox="0 0 8 11"><path d="M1 2.5V7.5A3 3 0 0 0 7 7.5V2.5A1.8 1.8 0 0 0 3.3 2.5V7.3A.8 .8 0 0 0 4.8 7.3V3.2" fill="none" stroke="#3c4e68" stroke-width="1"/></svg><div class="hl" style="left:284px;top:182px;width:963px;background:#c4d8f2"></div><div class="abs" style="left:284px;top:161px;width:21px;height:22px;background:#b5d1f6;border:1px dotted #000"></div><div class="cb" style="left:286px;top:165px"></div><svg class="abs" style="left:308.7px;top:163.3px" width="15.5" height="14.5" viewBox="0 0 20 20" preserveAspectRatio="none"><defs><linearGradient id="eor0" x1="0" y1="0" x2="1" y2="1"><stop offset=".3" stop-color="#ffffff"/><stop offset="1" stop-color="#86c0f8"/></linearGradient><linearGradient id="efr0" x1="0" y1="0" x2="1" y2="1"><stop offset=".15" stop-color="#fff8c8"/><stop offset=".85" stop-color="#f5a400"/></linearGradient></defs><path d="M1.5 6.9L10 1.1L18.5 6.9V10.5H1.5Z" fill="url(#efr0)"/><path d="M.9 6.6L10 .5L19.1 6.6" fill="none" stroke="#b4b2d0" stroke-width=".8"/><path d="M1.2 10.6C6 7.8 14 7.8 18.8 10.6V18.9H1.2Z" fill="url(#eor0)"/><path d="M1.4 9.4C6 6.9 14 6.9 18.6 9.4V11C14 8.4 6 8.4 1.4 11Z" fill="#f3f4fa"/><path d="M1.3 18.7L7.8 12.6C9.2 11.5 10.8 11.5 12.2 12.6L18.7 18.7" fill="none" stroke="#a3a8da" stroke-width=".8"/><path d="M1.3 10.8L6.3 14.2M18.7 10.8L13.7 14.2" stroke="#c0c4e6" stroke-width=".7"/><path d="M.7 6.6V19.3H19.3V6.6" fill="none" stroke="#5d63ae" stroke-width="1.3"/></svg><span class="t tah" style="left:356px;top:164px">andy-noreply@google.com</span><span class="t tah" style="left:504px;top:164px;letter-spacing:0.21px">Content, get more out of y...</span><span class="t tah" style="left:652px;top:164px">contentteam94@gmail.com;</span><span class="t tah" style="left:800px;top:164px;letter-spacing:-0.05px">3/29/2017 1:01:08 PM</span><span class="t tah" style="left:948px;top:164px;letter-spacing:-0.05px">3/29/2017 1:01:08 PM</span><span class="t tah" style="left:1096px;top:164px">39</span><div class="hl" style="left:284px;top:204px;width:963px;background:#c4d8f2"></div><div class="cb" style="left:286px;top:187px"></div><svg class="abs" style="left:308.7px;top:185.3px" width="15.5" height="14.5" viewBox="0 0 20 20" preserveAspectRatio="none"><defs><linearGradient id="eor1" x1="0" y1="0" x2="1" y2="1"><stop offset=".3" stop-color="#ffffff"/><stop offset="1" stop-color="#86c0f8"/></linearGradient><linearGradient id="efr1" x1="0" y1="0" x2="1" y2="1"><stop offset=".15" stop-color="#fff8c8"/><stop offset=".85" stop-color="#f5a400"/></linearGradient></defs><path d="M1.5 6.9L10 1.1L18.5 6.9V10.5H1.5Z" fill="url(#efr1)"/><path d="M.9 6.6L10 .5L19.1 6.6" fill="none" stroke="#b4b2d0" stroke-width=".8"/><path d="M1.2 10.6C6 7.8 14 7.8 18.8 10.6V18.9H1.2Z" fill="url(#eor1)"/><path d="M1.4 9.4C6 6.9 14 6.9 18.6 9.4V11C14 8.4 6 8.4 1.4 11Z" fill="#f3f4fa"/><path d="M1.3 18.7L7.8 12.6C9.2 11.5 10.8 11.5 12.2 12.6L18.7 18.7" fill="none" stroke="#a3a8da" stroke-width=".8"/><path d="M1.3 10.8L6.3 14.2M18.7 10.8L13.7 14.2" stroke="#c0c4e6" stroke-width=".7"/><path d="M.7 6.6V19.3H19.3V6.6" fill="none" stroke="#5d63ae" stroke-width="1.3"/></svg><svg class="abs" style="left:337px;top:187px" width="10" height="14" viewBox="0 0 10 14"><path d="M1.5 3.5V9.5A3.5 3.5 0 0 0 8.5 9.5V3A2.2 2.2 0 0 0 4 3V9.3A1 1 0 0 0 6 9.3V4" fill="none" stroke="#6f7c8e" stroke-width="1.3"/><path d="M2.3 3.5V9.5A2.7 2.7 0 0 0 7.7 9.5" fill="none" stroke="#c8d0da" stroke-width=".6"/></svg><span class="t tah" style="left:356px;top:186px">heena@systools.in</span><span class="t tah" style="left:504px;top:186px;letter-spacing:0.17px">Fwd: Fwd: Fwd: Fwd: letto...</span><span class="t tah" style="left:652px;top:186px">contentteam94@gmail.com;</span><span class="t tah" style="left:800px;top:186px;letter-spacing:-0.05px">3/30/2017 2:42:01 AM</span><span class="t tah" style="left:948px;top:186px;letter-spacing:-0.05px">3/30/2017 2:42:01 AM</span><span class="t tah" style="left:1096px;top:186px">371</span><div class="hl" style="left:284px;top:226px;width:963px;background:#c4d8f2"></div><div class="cb" style="left:286px;top:209px"></div><svg class="abs" style="left:309px;top:208.3px" width="15" height="13" viewBox="0 0 15 13"><defs><linearGradient id="ecr2" x1="0" y1="0" x2="0" y2="1"><stop offset="0" stop-color="#fffda6"/><stop offset=".55" stop-color="#fde58a"/><stop offset="1" stop-color="#fcc860"/></linearGradient></defs><path d="M.5 .5H14.5V12.5H.5Z" fill="url(#ecr2)" stroke="#dcd8a4"/><path d="M1 12L7.5 6.6L14 12Z" fill="#fdc48e"/><path d="M1 1.4L7.5 7.6L14 1.4" fill="none" stroke="#f0a63a" stroke-width=".9"/><path d="M1 12L5.6 6.2M14 12L9.4 6.2" stroke="#f4c070" stroke-width=".7" fill="none"/><path d="M.8 12.4H14.4V.8" fill="none" stroke="#7a7230" stroke-width="1.2"/></svg><span class="t tah" style="left:356px;top:208px;letter-spacing:-0.39px">team@moz.com</span><span class="t tah" style="left:504px;top:208px">Welcome to Moz. Check out...</span><span class="t tah" style="left:652px;top:208px">contentteam94@gmail.com;</span><span class="t tah" style="left:800px;top:208px;letter-spacing:-0.05px">3/29/2017 1:13:53 PM</span><span class="t tah" style="left:948px;top:208px;letter-spacing:-0.05px">3/29/2017 1:13:53 PM</span><span class="t tah" style="left:1096px;top:208px">25</span><div class="hl" style="left:284px;top:248px;width:963px;background:#c4d8f2"></div><div class="cb" style="left:286px;top:231px"></div><svg class="abs" style="left:309px;top:230.3px" width="15" height="13" viewBox="0 0 15 13"><defs><linearGradient id="ecr3" x1="0" y1="0" x2="0" y2="1"><stop offset="0" stop-color="#fffda6"/><stop offset=".55" stop-color="#fde58a"/><stop offset="1" stop-color="#fcc860"/></linearGradient></defs><path d="M.5 .5H14.5V12.5H.5Z" fill="url(#ecr3)" stroke="#dcd8a4"/><path d="M1 12L7.5 6.6L14 12Z" fill="#fdc48e"/><path d="M1 1.4L7.5 7.6L14 1.4" fill="none" stroke="#f0a63a" stroke-width=".9"/><path d="M1 12L5.6 6.2M14 12L9.4 6.2" stroke="#f4c070" stroke-width=".7" fill="none"/><path d="M.8 12.4H14.4V.8" fill="none" stroke="#7a7230" stroke-width="1.2"/></svg><span class="t tah" style="left:356px;top:230px;letter-spacing:-0.39px">team@moz.com</span><span class="t tah" style="left:504px;top:230px">Welcome to Moz. Check out...</span><span class="t tah" style="left:652px;top:230px">contentteam94@gmail.com;</span><span class="t tah" style="left:800px;top:230px;letter-spacing:-0.05px">3/29/2017 1:14:59 PM</span><span class="t tah" style="left:948px;top:230px;letter-spacing:-0.05px">3/29/2017 1:14:59 PM</span><span class="t tah" style="left:1096px;top:230px">25</span><div class="hl" style="left:284px;top:270px;width:963px;background:#c4d8f2"></div><div class="cb" style="left:286px;top:253px"></div><svg class="abs" style="left:309px;top:252.3px" width="15" height="13" viewBox="0 0 15 13"><defs><linearGradient id="ecr4" x1="0" y1="0" x2="0" y2="1"><stop offset="0" stop-color="#fffda6"/><stop offset=".55" stop-color="#fde58a"/><stop offset="1" stop-color="#fcc860"/></linearGradient></defs><path d="M.5 .5H14.5V12.5H.5Z" fill="url(#ecr4)" stroke="#dcd8a4"/><path d="M1 12L7.5 6.6L14 12Z" fill="#fdc48e"/><path d="M1 1.4L7.5 7.6L14 1.4" fill="none" stroke="#f0a63a" stroke-width=".9"/><path d="M1 12L5.6 6.2M14 12L9.4 6.2" stroke="#f4c070" stroke-width=".7" fill="none"/><path d="M.8 12.4H14.4V.8" fill="none" stroke="#7a7230" stroke-width="1.2"/></svg><span class="t tah" style="left:356px;top:252px;letter-spacing:0.02px">no-reply@accounts.google....</span><span class="t tah" style="left:504px;top:252px;letter-spacing:-0.02px">Review blocked sign-in atte...</span><span class="t tah" style="left:652px;top:252px">contentteam94@gmail.com;</span><span class="t tah" style="left:800px;top:252px;letter-spacing:-0.05px">3/30/2017 5:52:52 PM</span><span class="t tah" style="left:948px;top:252px;letter-spacing:-0.05px">3/30/2017 5:52:52 PM</span><span class="t tah" style="left:1096px;top:252px">13</span><div class="hl" style="left:284px;top:292px;width:963px;background:#c4d8f2"></div><div class="cb" style="left:286px;top:275px"></div><svg class="abs" style="left:308.7px;top:273.3px" width="15.5" height="14.5" viewBox="0 0 20 20" preserveAspectRatio="none"><defs><linearGradient id="eor5" x1="0" y1="0" x2="1" y2="1"><stop offset=".3" stop-color="#ffffff"/><stop offset="1" stop-color="#86c0f8"/></linearGradient><linearGradient id="efr5" x1="0" y1="0" x2="1" y2="1"><stop offset=".15" stop-color="#fff8c8"/><stop offset=".85" stop-color="#f5a400"/></linearGradient></defs><path d="M1.5 6.9L10 1.1L18.5 6.9V10.5H1.5Z" fill="url(#efr5)"/><path d="M.9 6.6L10 .5L19.1 6.6" fill="none" stroke="#b4b2d0" stroke-width=".8"/><path d="M1.2 10.6C6 7.8 14 7.8 18.8 10.6V18.9H1.2Z" fill="url(#eor5)"/><path d="M1.4 9.4C6 6.9 14 6.9 18.6 9.4V11C14 8.4 6 8.4 1.4 11Z" fill="#f3f4fa"/><path d="M1.3 18.7L7.8 12.6C9.2 11.5 10.8 11.5 12.2 12.6L18.7 18.7" fill="none" stroke="#a3a8da" stroke-width=".8"/><path d="M1.3 10.8L6.3 14.2M18.7 10.8L13.7 14.2" stroke="#c0c4e6" stroke-width=".7"/><path d="M.7 6.6V19.3H19.3V6.6" fill="none" stroke="#5d63ae" stroke-width="1.3"/></svg><span class="t tah" style="left:356px;top:274px;letter-spacing:0.02px">no-reply@accounts.google....</span><span class="t tah" style="left:504px;top:274px">Access for less secure apps...</span><span class="t tah" style="left:652px;top:274px">contentteam94@gmail.com;</span><span class="t tah" style="left:800px;top:274px;letter-spacing:-0.05px">3/31/2017 6:15:00 PM</span><span class="t tah" style="left:948px;top:274px;letter-spacing:-0.05px">3/31/2017 6:15:00 PM</span><span class="t tah" style="left:1096px;top:274px">11</span><div class="hl" style="left:284px;top:314px;width:963px;background:#c4d8f2"></div><div class="cb" style="left:286px;top:297px"></div><svg class="abs" style="left:309px;top:296.3px" width="15" height="13" viewBox="0 0 15 13"><defs><linearGradient id="ecr6" x1="0" y1="0" x2="0" y2="1"><stop offset="0" stop-color="#fffda6"/><stop offset=".55" stop-color="#fde58a"/><stop offset="1" stop-color="#fcc860"/></linearGradient></defs><path d="M.5 .5H14.5V12.5H.5Z" fill="url(#ecr6)" stroke="#dcd8a4"/><path d="M1 12L7.5 6.6L14 12Z" fill="#fdc48e"/><path d="M1 1.4L7.5 7.6L14 1.4" fill="none" stroke="#f0a63a" stroke-width=".9"/><path d="M1 12L5.6 6.2M14 12L9.4 6.2" stroke="#f4c070" stroke-width=".7" fill="none"/><path d="M.8 12.4H14.4V.8" fill="none" stroke="#7a7230" stroke-width="1.2"/></svg><span class="t tah" style="left:356px;top:296px;letter-spacing:0.02px">no-reply@accounts.google....</span><span class="t tah" style="left:504px;top:296px;letter-spacing:-0.05px">2-Step Verification turned on</span><span class="t tah" style="left:652px;top:296px">contentteam94@gmail.com;</span><span class="t tah" style="left:800px;top:296px;letter-spacing:-0.05px">3/31/2017 6:16:27 PM</span><span class="t tah" style="left:948px;top:296px;letter-spacing:-0.05px">3/31/2017 6:16:27 PM</span><span class="t tah" style="left:1096px;top:296px">13</span><div class="hl" style="left:284px;top:336px;width:963px;background:#c4d8f2"></div><div class="cb" style="left:286px;top:319px"></div><svg class="abs" style="left:309px;top:318.3px" width="15" height="13" viewBox="0 0 15 13"><defs><linearGradient id="ecr7" x1="0" y1="0" x2="0" y2="1"><stop offset="0" stop-color="#fffda6"/><stop offset=".55" stop-color="#fde58a"/><stop offset="1" stop-color="#fcc860"/></linearGradient></defs><path d="M.5 .5H14.5V12.5H.5Z" fill="url(#ecr7)" stroke="#dcd8a4"/><path d="M1 12L7.5 6.6L14 12Z" fill="#fdc48e"/><path d="M1 1.4L7.5 7.6L14 1.4" fill="none" stroke="#f0a63a" stroke-width=".9"/><path d="M1 12L5.6 6.2M14 12L9.4 6.2" stroke="#f4c070" stroke-width=".7" fill="none"/><path d="M.8 12.4H14.4V.8" fill="none" stroke="#7a7230" stroke-width="1.2"/></svg><span class="t tah" style="left:356px;top:318px;letter-spacing:0.02px">no-reply@accounts.google....</span><span class="t tah" style="left:504px;top:318px">App password created</span><span class="t tah" style="left:652px;top:318px">contentteam94@gmail.com;</span><span class="t tah" style="left:800px;top:318px;letter-spacing:-0.05px">3/31/2017 6:27:04 PM</span><span class="t tah" style="left:948px;top:318px;letter-spacing:-0.05px">3/31/2017 6:27:04 PM</span><span class="t tah" style="left:1096px;top:318px">10</span><div class="hl" style="left:284px;top:358px;width:963px;background:#c4d8f2"></div><div class="cb" style="left:286px;top:341px"></div><svg class="abs" style="left:309px;top:340.3px" width="15" height="13" viewBox="0 0 15 13"><defs><linearGradient id="ecr8" x1="0" y1="0" x2="0" y2="1"><stop offset="0" stop-color="#fffda6"/><stop offset=".55" stop-color="#fde58a"/><stop offset="1" stop-color="#fcc860"/></linearGradient></defs><path d="M.5 .5H14.5V12.5H.5Z" fill="url(#ecr8)" stroke="#dcd8a4"/><path d="M1 12L7.5 6.6L14 12Z" fill="#fdc48e"/><path d="M1 1.4L7.5 7.6L14 1.4" fill="none" stroke="#f0a63a" stroke-width=".9"/><path d="M1 12L5.6 6.2M14 12L9.4 6.2" stroke="#f4c070" stroke-width=".7" fill="none"/><path d="M.8 12.4H14.4V.8" fill="none" stroke="#7a7230" stroke-width="1.2"/></svg><span class="t tah" style="left:356px;top:340px;letter-spacing:-0.19px">contentteam94@gmail.com</span><span class="t tah" style="left:504px;top:340px;letter-spacing:-0.03px">Microsoft Outlook Test Mes...</span><span class="t tah" style="left:652px;top:340px;letter-spacing:0.06px">Content &lt;contentteam94@...</span><span class="t tah" style="left:800px;top:340px;letter-spacing:-0.05px">3/31/2017 6:30:35 PM</span><span class="t tah" style="left:948px;top:340px;letter-spacing:-0.05px">3/31/2017 6:30:35 PM</span><span class="t tah" style="left:1096px;top:340px">4</span><div class="hl" style="left:284px;top:380px;width:963px;background:#c4d8f2"></div><div class="cb" style="left:286px;top:363px"></div><svg class="abs" style="left:309px;top:362.3px" width="15" height="13" viewBox="0 0 15 13"><defs><linearGradient id="ecr9" x1="0" y1="0" x2="0" y2="1"><stop offset="0" stop-color="#fffda6"/><stop offset=".55" stop-color="#fde58a"/><stop offset="1" stop-color="#fcc860"/></linearGradient></defs><path d="M.5 .5H14.5V12.5H.5Z" fill="url(#ecr9)" stroke="#dcd8a4"/><path d="M1 12L7.5 6.6L14 12Z" fill="#fdc48e"/><path d="M1 1.4L7.5 7.6L14 1.4" fill="none" stroke="#f0a63a" stroke-width=".9"/><path d="M1 12L5.6 6.2M14 12L9.4 6.2" stroke="#f4c070" stroke-width=".7" fill="none"/><path d="M.8 12.4H14.4V.8" fill="none" stroke="#7a7230" stroke-width="1.2"/></svg><span class="t tah" style="left:356px;top:362px;letter-spacing:-0.19px">contentteam94@gmail.com</span><span class="t tah" style="left:504px;top:362px;letter-spacing:-0.03px">Microsoft Outlook Test Mes...</span><span class="t tah" style="left:652px;top:362px;letter-spacing:0.06px">Content &lt;contentteam94@...</span><span class="t tah" style="left:800px;top:362px;letter-spacing:-0.05px">4/3/2017 8:41:51 AM</span><span class="t tah" style="left:948px;top:362px;letter-spacing:-0.05px">4/3/2017 8:41:51 AM</span><span class="t tah" style="left:1096px;top:362px">4</span><div class="hl" style="left:284px;top:402px;width:963px;background:#c4d8f2"></div><div class="cb" style="left:286px;top:385px"></div><svg class="abs" style="left:308.7px;top:383.3px" width="15.5" height="14.5" viewBox="0 0 20 20" preserveAspectRatio="none"><defs><linearGradient id="eor10" x1="0" y1="0" x2="1" y2="1"><stop offset=".3" stop-color="#ffffff"/><stop offset="1" stop-color="#86c0f8"/></linearGradient><linearGradient id="efr10" x1="0" y1="0" x2="1" y2="1"><stop offset=".15" stop-color="#fff8c8"/><stop offset=".85" stop-color="#f5a400"/></linearGradient></defs><path d="M1.5 6.9L10 1.1L18.5 6.9V10.5H1.5Z" fill="url(#efr10)"/><path d="M.9 6.6L10 .5L19.1 6.6" fill="none" stroke="#b4b2d0" stroke-width=".8"/><path d="M1.2 10.6C6 7.8 14 7.8 18.8 10.6V18.9H1.2Z" fill="url(#eor10)"/><path d="M1.4 9.4C6 6.9 14 6.9 18.6 9.4V11C14 8.4 6 8.4 1.4 11Z" fill="#f3f4fa"/><path d="M1.3 18.7L7.8 12.6C9.2 11.5 10.8 11.5 12.2 12.6L18.7 18.7" fill="none" stroke="#a3a8da" stroke-width=".8"/><path d="M1.3 10.8L6.3 14.2M18.7 10.8L13.7 14.2" stroke="#c0c4e6" stroke-width=".7"/><path d="M.7 6.6V19.3H19.3V6.6" fill="none" stroke="#5d63ae" stroke-width="1.3"/></svg><span class="t tah" style="left:356px;top:384px;letter-spacing:-0.19px">contentteam94@gmail.com</span><span class="t tah" style="left:504px;top:384px;letter-spacing:-0.03px">Microsoft Outlook Test Mes...</span><span class="t tah" style="left:652px;top:384px;letter-spacing:0.06px">Content &lt;contentteam94@...</span><span class="t tah" style="left:800px;top:384px;letter-spacing:-0.05px">4/3/2017 8:51:08 AM</span><span class="t tah" style="left:948px;top:384px;letter-spacing:-0.05px">4/3/2017 8:51:08 AM</span><span class="t tah" style="left:1096px;top:384px">4</span><div class="cb" style="left:286px;top:407px"></div><svg class="abs" style="left:308.7px;top:405.3px" width="15.5" height="14.5" viewBox="0 0 20 20" preserveAspectRatio="none"><defs><linearGradient id="eor11" x1="0" y1="0" x2="1" y2="1"><stop offset=".3" stop-color="#ffffff"/><stop offset="1" stop-color="#86c0f8"/></linearGradient><linearGradient id="efr11" x1="0" y1="0" x2="1" y2="1"><stop offset=".15" stop-color="#fff8c8"/><stop offset=".85" stop-color="#f5a400"/></linearGradient></defs><path d="M1.5 6.9L10 1.1L18.5 6.9V10.5H1.5Z" fill="url(#efr11)"/><path d="M.9 6.6L10 .5L19.1 6.6" fill="none" stroke="#b4b2d0" stroke-width=".8"/><path d="M1.2 10.6C6 7.8 14 7.8 18.8 10.6V18.9H1.2Z" fill="url(#eor11)"/><path d="M1.4 9.4C6 6.9 14 6.9 18.6 9.4V11C14 8.4 6 8.4 1.4 11Z" fill="#f3f4fa"/><path d="M1.3 18.7L7.8 12.6C9.2 11.5 10.8 11.5 12.2 12.6L18.7 18.7" fill="none" stroke="#a3a8da" stroke-width=".8"/><path d="M1.3 10.8L6.3 14.2M18.7 10.8L13.7 14.2" stroke="#c0c4e6" stroke-width=".7"/><path d="M.7 6.6V19.3H19.3V6.6" fill="none" stroke="#5d63ae" stroke-width="1.3"/></svg><span class="t tah" style="left:356px;top:406px;letter-spacing:-0.19px">contentteam94@gmail.com</span><span class="t tah" style="left:504px;top:406px;letter-spacing:-0.03px">Microsoft Outlook Test Mes...</span><span class="t tah" style="left:652px;top:406px;letter-spacing:0.06px">Content &lt;contentteam94@...</span><span class="t tah" style="left:800px;top:406px;letter-spacing:-0.05px">4/3/2017 9:04:11 AM</span><span class="t tah" style="left:948px;top:406px;letter-spacing:-0.05px">4/3/2017 9:04:11 AM</span><span class="t tah" style="left:1096px;top:406px">4</span><div class="abs" style="left:1247px;top:108px;width:14px;height:317px;background:#f6f6f6"></div><svg class="abs" style="left:1251px;top:113px" width="9" height="6" viewBox="0 0 9 6"><path d="M0 6L4.5 .5L9 6Z" fill="#3b4c80"/></svg><svg class="abs" style="left:1251px;top:414px" width="9" height="5" viewBox="0 0 9 6"><path d="M0 0L4.5 5.5L9 0Z" fill="#3b4c80"/></svg><div class="abs" style="left:1248px;top:126px;width:14px;height:18px;border:1px solid #5a78b8;border-radius:2px;background:linear-gradient(90deg,#fdfeff,#dfe9f8)"></div><div class="hl" style="left:1251px;top:131px;width:9px;background:#7a7a7a"></div><div class="hl" style="left:1251px;top:133px;width:9px;background:#7a7a7a"></div><div class="hl" style="left:1251px;top:136px;width:9px;background:#7a7a7a"></div><div class="hl" style="left:1251px;top:138px;width:9px;background:#7a7a7a"></div><div class="abs" style="left:284px;top:430px;width:977px;height:32px;background:#f0f0f0"></div><div class="hl" style="left:284px;top:462px;width:977px;background:#a5a5a5"></div><div class="hl" style="left:284px;top:463px;width:977px;background:#fff"></div><div class="tab" style="left:740px;width:76px;height:30px;z-index:1"><span class="t seg" style="left:0;width:74px;top:6px;text-align:center;letter-spacing:-0.41px">Attachments</span></div><div class="tab" style="left:692px;width:50px;height:30px;z-index:1"><span class="t seg" style="left:0;width:48px;top:6px;text-align:center;letter-spacing:-0.3px">RTF</span></div><div class="tab" style="left:644px;width:50px;height:30px;z-index:1"><span class="t seg" style="left:0;width:48px;top:6px;text-align:center;letter-spacing:-0.3px">HTML</span></div><div class="tab" style="left:596px;width:50px;height:30px;z-index:1"><span class="t seg" style="left:0;width:48px;top:6px;text-align:center;letter-spacing:-0.3px">MIME</span></div><div class="tab" style="left:499px;width:99px;height:30px;z-index:1"><span class="t seg" style="left:0;width:97px;top:6px;text-align:center;letter-spacing:-0.47px">Message Header</span></div><div class="tab" style="left:435px;width:66px;height:30px;z-index:1"><span class="t seg" style="left:0;width:64px;top:6px;text-align:center;letter-spacing:-0.3px">Properties</span></div><div class="tab" style="left:387px;width:50px;height:30px;z-index:1"><span class="t seg" style="left:0;width:48px;top:6px;text-align:center;letter-spacing:-0.3px">Hex</span></div><div class="tab" style="left:285px;width:104px;height:31px;z-index:2"><span class="t seg" style="left:0;width:102px;top:6px;text-align:center;letter-spacing:-0.26px">Normal Mail View</span></div><div class="abs" style="left:283px;top:430px;width:534px;height:31px;border:1px solid #e8202c;z-index:3"></div><div class="vl" style="left:284px;top:463px;height:309px;background:#a0a0a0"></div><div class="vl" style="left:285px;top:463px;height:308px;width:2px;background:#fff"></div><div class="hl" style="left:285px;top:769px;width:976px;height:2px;background:#fff"></div><div class="hl" style="left:284px;top:771px;width:977px;background:#a8a8a8"></div><div class="abs" style="left:287px;top:464px;width:974px;height:194px;background:#bfdbff;border:1px solid #6a93d4"></div><span class="t verb" style="left:291px;top:464px">Path</span><span class="t ver" style="left:389.5px;top:464px">:</span><span class="t verb" style="left:291px;top:486px">From</span><span class="t ver" style="left:389.5px;top:486px">:</span><span class="t ver" style="left:398.5px;top:486px">andy-noreply@google.com</span><span class="t verb" style="left:291px;top:508px">To</span><span class="t ver" style="left:389.5px;top:508px">:</span><span class="t ver" style="left:398.5px;top:508px;letter-spacing:-0.33px">contentteam94@gmail.com;</span><span class="t verb" style="left:291px;top:530px">Cc</span><span class="t ver" style="left:389.5px;top:530px">:</span><span class="t verb" style="left:291px;top:552px">Bcc</span><span class="t ver" style="left:389.5px;top:552px">:</span><span class="t verb" style="left:291px;top:574px">Subject</span><span class="t ver" style="left:389.5px;top:574px">:</span><span class="t ver" style="left:398.5px;top:574px">Content, get more out of your new Google Account</span><span class="t verb" style="left:291px;top:596px">Attachment(s)</span><span class="t ver" style="left:389.5px;top:596px">:</span><span class="t" style="left:398.3px;font-size:11px;top:464px;height:14px;border-bottom:1px solid;color:#1a6fe0;letter-spacing:0.24px">\\backup.pst\IPMRoot\Top</span><span class="t" style="left:530px;width:8px;font-size:11px;top:464px;height:14px;border-bottom:1px solid;color:#000"> </span><span class="t" style="left:537px;font-size:11px;top:464px;height:14px;border-bottom:1px solid;color:#000;letter-spacing:-0.39px">of Personal Folders\G</span><span class="t" style="left:635.8px;font-size:11px;top:464px;height:14px;border-bottom:1px solid;color:#000;letter-spacing:-0.035px">mail (contentteam94)\Inbox\</span><span class="t verb" style="left:936px;top:464px">Date Time</span><span class="t ver" style="left:999.5px;top:464px">:</span><span class="t" style="left:1011px;top:464px;font-size:11px;letter-spacing:-0.05px">3/29/2017 1:01:08 PM</span><div class="abs" style="left:536px;top:465px;width:99px;height:19px;background:#fff;border:1px solid #767676;box-shadow:2px 2px 2px rgba(0,0,0,.35);z-index:5"><span class="t seg" style="left:5px;top:1px;color:#575757;letter-spacing:-0.33px">Message Header</span></div><div class="abs" style="left:287px;top:657px;width:974px;height:112px;background:#fff;border:1px solid #6a93d4"></div><div class="abs" style="left:506px;top:658px;width:520px;height:110px;background:#ededed"></div><div class="abs" style="left:526px;top:678px;width:480px;height:90px;background:#fff"></div><span class="t" style="left:526px;width:480px;top:732px;text-align:center;font-size:32px;line-height:40px;height:36px;overflow:hidden;color:#4285f4;letter-spacing:0.3px;-webkit-text-stroke:0.45px #fff">Hi Content,</span><div class="abs" style="left:1243px;top:658px;width:17px;height:110px;background:#f0f0f0"></div><div class="abs" style="left:1244px;top:692px;width:15px;height:15px;background:#cdcdcd"></div><svg class="abs" style="left:1246px;top:675px" width="11" height="9" viewBox="0 0 11 9"><path d="M.8 7.6L5.5 2.6L10.2 7.6" fill="none" stroke="#505050" stroke-width="2.7"/></svg><svg class="abs" style="left:1246px;top:742px" width="11" height="9" viewBox="0 0 11 9"><path d="M.8 1.4L5.5 6.4L10.2 1.4" fill="none" stroke="#505050" stroke-width="2.7"/></svg><div class="hl" style="left:0;top:0;width:1262px;background:#1a1a1a;z-index:9"></div><div class="hl" style="left:0;top:792px;width:1262px;background:#1a1a1a;z-index:9"></div><div class="vl" style="left:0;top:0;height:793px;background:#1a1a1a;z-index:9"></div><div class="vl" style="left:1261px;top:0;height:793px;background:#1a1a1a;z-index:9"></div>
</div>
</body>
</html>
